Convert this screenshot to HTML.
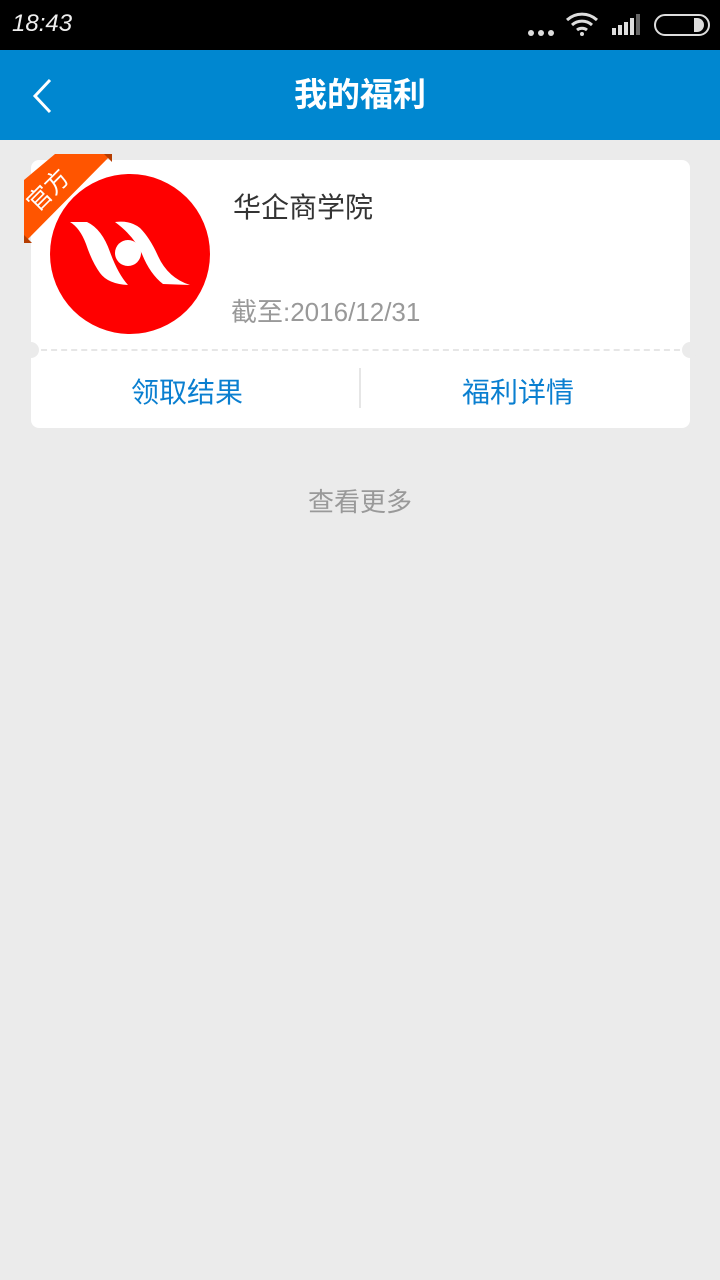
<!DOCTYPE html>
<html><head><meta charset="utf-8"><style>
body{margin:0;width:720px;height:1280px;background:#ebebeb;font-family:"Liberation Sans","Noto Sans CJK SC",sans-serif;position:relative;overflow:hidden}
.sb{position:absolute;left:0;top:0;width:720px;height:50px;background:#000;color:#fff}
.hd{position:absolute;left:0;top:50px;width:720px;height:90px;background:#0087d0;color:#fff;text-align:center;line-height:90px;font-size:33px;font-weight:bold}
.card{position:absolute;left:31px;top:160px;width:659px;height:268px;background:#fff;border-radius:8px}
.t{position:absolute;font-size:28px}
</style></head><body>
<div class="sb">
<div style="position:absolute;left:12px;top:10px;font-size:24px;font-style:italic;color:#eee">18:43</div>
<div style="position:absolute;left:528px;top:30px;width:6px;height:6px;border-radius:3px;background:#ddd;box-shadow:10px 0 #ddd,20px 0 #ddd"></div>
<svg style="position:absolute;left:565px;top:12px" width="34" height="24"><path d="M2 8 A22 22 0 0 1 32 8" stroke="#ddd" stroke-width="3" fill="none"/><path d="M7 13 A15 15 0 0 1 27 13" stroke="#ddd" stroke-width="3" fill="none"/><path d="M12 18 A8 8 0 0 1 22 18" stroke="#ddd" stroke-width="3" fill="none"/><circle cx="17" cy="22" r="2" fill="#ddd"/></svg>
<svg style="position:absolute;left:612px;top:14px" width="30" height="22"><rect x="0" y="14" width="4" height="7" fill="#ddd"/><rect x="6" y="11" width="4" height="10" fill="#ddd"/><rect x="12" y="8" width="4" height="13" fill="#ddd"/><rect x="18" y="4" width="4" height="17" fill="#ddd"/><rect x="24" y="0" width="4" height="21" fill="#666"/></svg>
<div style="position:absolute;left:654px;top:14px;width:52px;height:18px;border:2px solid #ddd;border-radius:11px"></div>
<div style="position:absolute;left:694px;top:18px;width:10px;height:14px;background:#ddd;border-radius:0 7px 7px 0"></div>
</div>
<div class="hd">我的福利</div>
<svg style="position:absolute;left:30px;top:78px" width="24" height="36"><path d="M20 2 L5 18 L20 34" stroke="#fff" stroke-width="3" fill="none"/></svg>
<div class="card">
<div class="t" style="left:202px;top:26px;color:#333">华企商学院</div>
<div class="t" style="left:200px;top:132px;color:#999;font-size:26px">截至:2016/12/31</div>
<div style="position:absolute;left:0;top:189px;width:659px;border-top:2px dashed #e6e6e6"></div>
<div style="position:absolute;left:-8px;top:182px;width:16px;height:16px;border-radius:8px;background:#ebebeb"></div>
<div style="position:absolute;left:651px;top:182px;width:16px;height:16px;border-radius:8px;background:#ebebeb"></div>
<div style="position:absolute;left:328px;top:208px;width:2px;height:40px;background:#e6e6e6"></div>
<div class="t" style="left:100px;top:211px;color:#0a7fd0">领取结果</div>
<div class="t" style="left:431px;top:211px;color:#0a7fd0">福利详情</div>
</div>
<div style="position:absolute;left:50px;top:174px;width:160px;height:160px;border-radius:80px;background:#f00"></div>
<svg style="position:absolute;left:50px;top:174px" width="160" height="160"><path d="M20 48 L37 48 Q52 55 60 78 Q68 100 78 111 Q58 110 50 99 Q42 88 36 70 Q30 54 20 48Z" fill="#fff"/><path d="M65 48 Q80 46 90 54 Q100 64 108 82 Q118 104 140 111 L113 110 Q100 100 92 80 Q84 62 65 48Z" fill="#fff"/><circle cx="78" cy="79" r="13" fill="#fff"/></svg>
<svg style="position:absolute;left:0;top:140px" width="130" height="120"><polygon points="55,14 112,14 24,103 24,40" fill="#ff5500"/><polygon points="112,14 104,14 112,22" fill="#b53c00"/><polygon points="24,103 24,95 32,103" fill="#b53c00"/><text x="0" y="0" transform="translate(54,56) rotate(-45)" fill="#fff" font-size="24" text-anchor="middle" font-family="Noto Sans CJK SC,sans-serif">官方</text></svg>
<div style="position:absolute;left:0;top:482px;width:720px;text-align:center;color:#999;font-size:26px">查看更多</div>
</body></html>
